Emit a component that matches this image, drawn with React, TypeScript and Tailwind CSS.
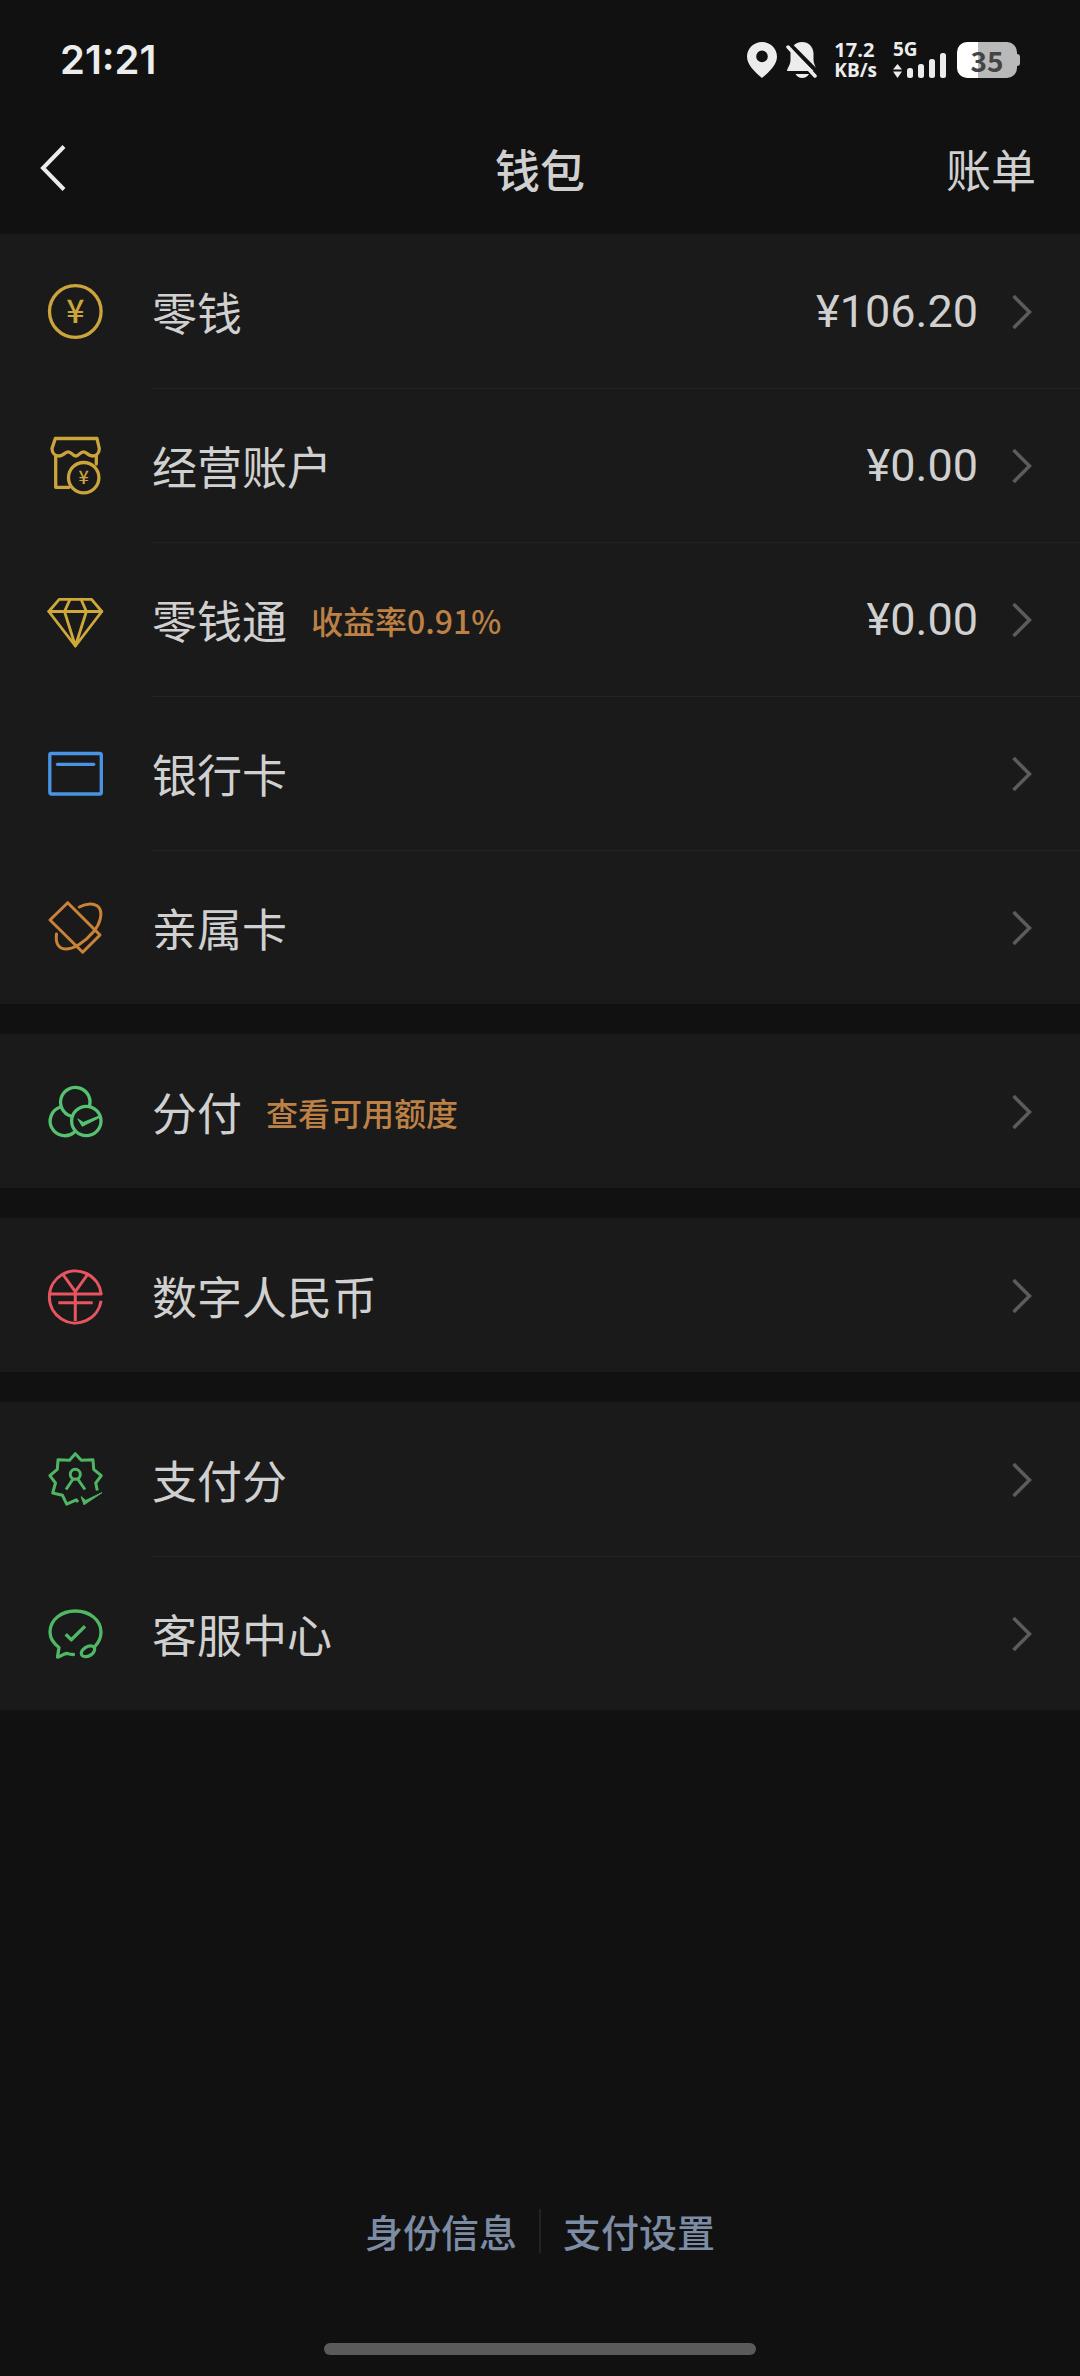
import type { ReactNode } from "react";

type WalletItem = {
  label: string;
  icon: ReactNode;
  note?: string;
  amount?: string;
};

function LineIcon({
  className,
  children,
}: {
  className: string;
  children: ReactNode;
}) {
  return (
    <svg
      viewBox="0 0 60 60"
      className={`h-15 w-15 shrink-0 ${className}`}
      fill="none"
      stroke="currentColor"
      strokeWidth="3.3"
      strokeLinecap="round"
      strokeLinejoin="round"
      aria-hidden="true"
    >
      {children}
    </svg>
  );
}

const coinIcon = (
  <LineIcon className="text-[#cca43c]">
    <circle cx="30.3" cy="30.5" r="25.8" />
    <text
      x="30.3"
      y="42"
      textAnchor="middle"
      fill="currentColor"
      stroke="none"
      className="font-['Noto_Sans_CJK_SC',sans-serif] text-[32px] font-medium"
    >
      ¥
    </text>
  </LineIcon>
);

const shopIcon = (
  <LineIcon className="text-[#cca43c]">
    <path d="M10.3 3.5H52L54.3 13.5C54.3 18 51.5 21 47.5 21C43 21 41.5 16.8 38.3 16.8S34 21 30.8 21S26.5 16.8 23.3 16.8S18.5 21 14 21C10 21 7 18 7 13.5Z" />
    <path d="M10.7 21V52.3H24M51.3 21V29" />
    <circle cx="38.7" cy="42.7" r="15.2" />
    <text
      x="38.7"
      y="49"
      textAnchor="middle"
      fill="currentColor"
      stroke="none"
      className="font-['Noto_Sans_CJK_SC',sans-serif] text-[18px] font-medium"
    >
      ¥
    </text>
  </LineIcon>
);

const gemIcon = (
  <LineIcon className="text-[#cfa83a]">
    <g strokeWidth="2.8">
      <path d="M14.2 10.3H46.6L56.8 22.5L30.4 57L3.8 22.5Z" />
      <path d="M3.8 22.5H56.8" />
      <path d="M25 10.3L19.5 22.5L30.4 57L41.4 22.5L36 10.3" />
    </g>
  </LineIcon>
);

const cardIcon = (
  <LineIcon className="text-[#4a94e6]">
    <rect x="4.8" y="10.5" width="51.5" height="40.5" rx="1.5" />
    <path d="M12.5 21.3H48.7" />
  </LineIcon>
);

const familyIcon = (
  <LineIcon className="text-[#c98236]">
    <g strokeWidth="3">
      <path d="M22.7 5.7L5 23L37.7 55.3L55 38Z" />
      <path d="M34.3 10C41 6.2 49.5 5.5 53.5 10C58.5 16 55 27 48.5 34.8C40 45 29 52 20.5 52C12.5 51.8 10.5 45 11.5 37" />
    </g>
  </LineIcon>
);

const circlesIcon = (
  <LineIcon className="text-[#56c271]">
    <path d="M25.6 35A14.7 14.7 0 1 1 44.3 25.5" />
    <path d="M15.5 26A14.7 14.7 0 1 0 29.3 51.3" />
    <circle cx="41.3" cy="40" r="14.7" />
    <path
      d="M33 38.2L37.3 45.3L55 36.3L54.6 34.8L38.6 41.3Z"
      fill="currentColor"
      strokeWidth="1"
    />
  </LineIcon>
);

const yuanIcon = (
  <LineIcon className="text-[#e8545f]">
    <g strokeLinecap="butt" strokeWidth="3">
      <path d="M56.1 35.7A26 26 0 1 1 56.2 29H4.5" />
      <path d="M17.3 8.5L30.3 26.7L43.3 8.5M30.3 26.7V56M13.3 37.7H47.7" />
    </g>
  </LineIcon>
);

const badgeIcon = (
  <LineIcon className="text-[#4fb562]">
    <g strokeWidth="3" strokeLinecap="butt">
      <path d="M52.3 41.5L50.7 34L56.3 26.7L48.7 20.3L48 10.8L36.3 11.3L30.3 4.7L24.5 11.3L13 10.8L12.3 20.3L4.9 26.7L10.5 34L7.7 44L17.5 46.3L21.7 55.2L31.3 50.8L33 53" />
      <circle cx="30.3" cy="25.3" r="5" />
      <path d="M28 30L21 40.5M32.7 30L40 40.5" />
    </g>
    <path
      d="M36.3 48L39 55.8L57 43.6L41 51.3Z"
      fill="currentColor"
      strokeWidth="1"
    />
  </LineIcon>
);

const supportIcon = (
  <LineIcon className="text-[#4fb865]">
    <path d="M50 43.3C53.7 39.5 56 34.5 56 29C56 17 44.5 8 30.3 8S5 17 5 29C5 35.5 8.7 40.5 14 44.5L12.5 54C16.5 53.5 18.5 50.3 22.3 50.5C24.5 51.2 26.5 51.5 28.5 51.5" />
    <ellipse
      cx="43"
      cy="48.3"
      rx="7.3"
      ry="4.6"
      transform="rotate(-30 43 48.3)"
    />
    <path d="M20.7 31.3L26.3 36.8L40 23.3" strokeLinecap="butt" />
  </LineIcon>
);

const groups: WalletItem[][] = [
  [
    { label: "零钱", icon: coinIcon, amount: "¥106.20" },
    { label: "经营账户", icon: shopIcon, amount: "¥0.00" },
    {
      label: "零钱通",
      icon: gemIcon,
      note: "收益率0.91%",
      amount: "¥0.00",
    },
    { label: "银行卡", icon: cardIcon },
    { label: "亲属卡", icon: familyIcon },
  ],
  [{ label: "分付", icon: circlesIcon, note: "查看可用额度" }],
  [{ label: "数字人民币", icon: yuanIcon }],
  [
    { label: "支付分", icon: badgeIcon },
    { label: "客服中心", icon: supportIcon },
  ],
];

function StatusBar() {
  return (
    <div className="flex h-30 items-center justify-between px-15 text-[#ececec]">
      <span className="font-['Inter',sans-serif] text-[40px] leading-none font-semibold">
        21:21
      </span>
      <div className="flex h-9 items-center font-['Open_Sans',sans-serif] font-bold">
        <svg viewBox="0 0 30 36" className="h-9 w-[30px]" aria-hidden="true">
          <path
            fill="currentColor"
            fillRule="evenodd"
            d="M15 0C6.7 0 0 6.5 0 14.6C0 22.5 7 29.5 15 36C23 29.5 30 22.5 30 14.6C30 6.5 23.3 0 15 0ZM15 8.6A5.8 5.8 0 1 1 15 20.2A5.8 5.8 0 0 1 15 8.6Z"
          />
        </svg>
        <svg
          viewBox="0 0 32 36"
          className="ml-[9px] h-9 w-8"
          aria-hidden="true"
        >
          <path
            fill="currentColor"
            d="M16 0C22.5 0 27 4.6 27.5 11V18C27.5 22 30 24.5 30.5 29H1C1.5 25.5 4.5 23 4.5 18V12C4.5 5 9 0 16 0ZM9.5 32H23C21.5 34.7 19 36 16.2 36S11 34.7 9.5 32Z"
          />
          <path d="M3 1.5L33 31.5" stroke="#111111" strokeWidth="4" />
          <path
            d="M2 5L29 34"
            stroke="currentColor"
            strokeWidth="3.5"
            strokeLinecap="round"
          />
        </svg>
        <div className="ml-4 text-[20px] leading-[20px]">
          <div>17.2</div>
          <div className="text-[19px]">KB/s</div>
        </div>
        <div className="ml-4 flex flex-col">
          <span className="-mb-1 text-[19px] leading-[14px]">5G</span>
          <svg
            viewBox="0 0 54 26"
            className="h-[26px] w-[54px] shrink-0"
            aria-hidden="true"
          >
            <g fill="currentColor">
              <path d="M4.5 12L9 17.5H0ZM4.5 26L9 19.5H0Z" />
              <rect x="14" y="16" width="6" height="10" rx="2.5" />
              <rect x="25" y="12" width="6" height="14" rx="2.5" />
              <rect x="36" y="7" width="6" height="19" rx="2.5" />
              <rect x="47" y="1" width="6" height="25" rx="2.5" />
            </g>
          </svg>
        </div>
        <div className="ml-2.5 flex items-center">
          <div className="flex h-9 w-15 items-center justify-center rounded-[10px] bg-linear-to-r from-white from-35% to-[#b9b9b9] to-35% font-['Noto_Sans_CJK_SC',sans-serif] text-[28px] leading-none font-bold text-[#444444]">
            35
          </div>
          <div className="h-3 w-[3px] rounded-r-sm bg-[#b9b9b9]" />
        </div>
      </div>
    </div>
  );
}

function NavBar() {
  return (
    <header className="mb-[18px] grid h-24 grid-cols-3 items-center px-10 text-[45px] leading-none text-[#d0d0d0]">
      <button type="button" aria-label="返回" className="justify-self-start">
        <svg
          viewBox="0 0 26 46"
          className="h-[46px] w-[26px] text-[#ececec]"
          fill="none"
          stroke="currentColor"
          strokeWidth="4"
          aria-hidden="true"
        >
          <path d="M24 1.5L3 23L24 44.5" />
        </svg>
      </button>
      <h1 className="justify-self-center font-medium">钱包</h1>
      <a href="#bill" className="justify-self-end pr-1">
        账单
      </a>
    </header>
  );
}

function WalletRow({ item, divided }: { item: WalletItem; divided: boolean }) {
  return (
    <li>
      <a href="#item" className="flex h-[154px] items-center gap-[47px] pl-[45px]">
        {item.icon}
        <div
          className={`flex h-full flex-1 items-center border-t pr-12 ${
            divided ? "border-[#232323]" : "border-transparent"
          }`}
        >
          <span className="text-[45px] leading-none text-[#d0d0d0]">
            {item.label}
          </span>
          {item.note && (
            <span className="ml-6 text-[32px] leading-none font-medium text-[#bd8145]">
              {item.note}
            </span>
          )}
          {item.amount && (
            <span className="ml-auto font-['Roboto',sans-serif] text-[45px] leading-none text-[#d0d0d0]">
              {item.amount}
            </span>
          )}
          <svg
            viewBox="0 0 20 36"
            className={`h-9 w-5 shrink-0 text-[#5c5c5c] ${
              item.amount ? "ml-[34px]" : "ml-auto"
            }`}
            fill="none"
            stroke="currentColor"
            strokeWidth="3.5"
            aria-hidden="true"
          >
            <path d="M1.5 2L17.5 18L1.5 34" />
          </svg>
        </div>
      </a>
    </li>
  );
}

export default function App() {
  return (
    <div className="flex min-h-screen flex-col bg-[#111111] font-['Noto_Sans_CJK_SC',sans-serif]">
      <StatusBar />
      <NavBar />
      <main className="flex flex-col gap-[30px]">
        {groups.map((items) => (
          <ul key={items[0].label} className="bg-[#1a1a1a]">
            {items.map((item, index) => (
              <WalletRow key={item.label} item={item} divided={index > 0} />
            ))}
          </ul>
        ))}
      </main>
      <footer className="mt-auto flex flex-col items-center pb-[21px]">
        <nav className="flex items-center gap-[22px] text-[38px] leading-none font-medium text-[#7d8ca5]">
          <a href="#identity">身份信息</a>
          <span className="h-11 w-0.5 bg-[#222222]" />
          <a href="#settings">支付设置</a>
        </nav>
        <div className="mt-[90px] h-3 w-2/5 rounded-full bg-[#5a5a5a]" />
      </footer>
    </div>
  );
}
